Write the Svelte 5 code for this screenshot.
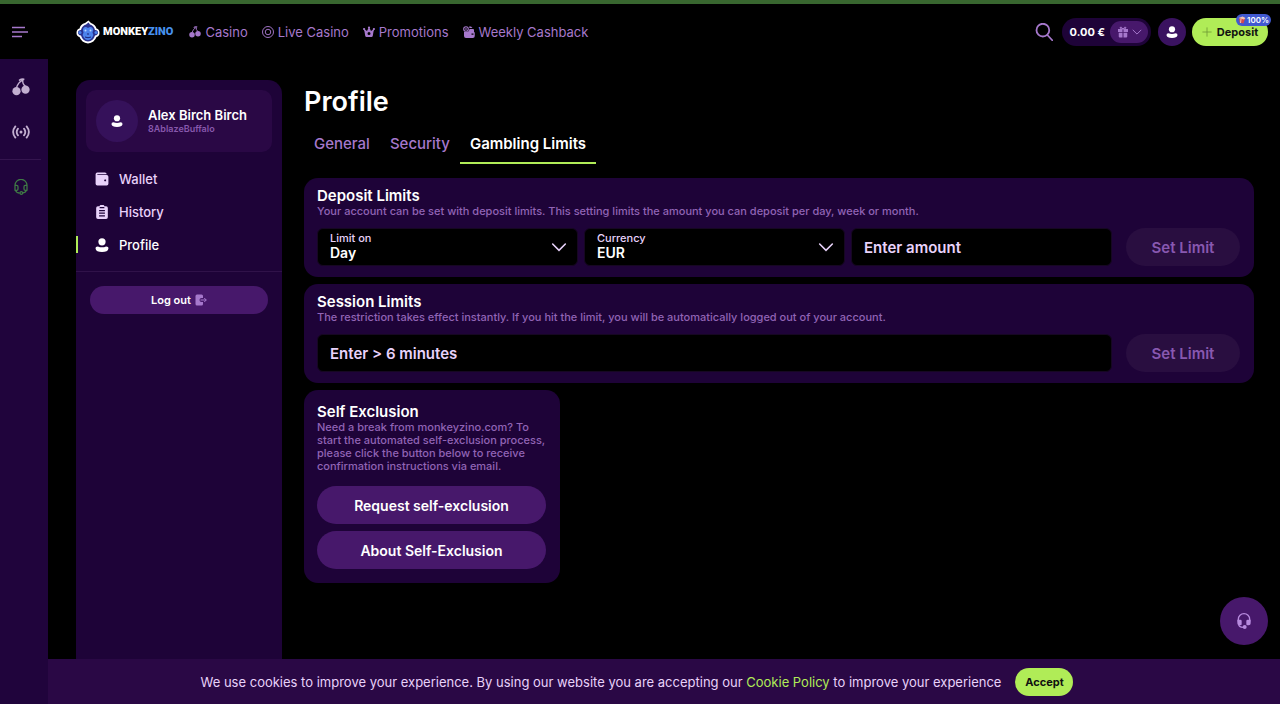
<script>
  const topLinks = [
    { icon: 'cherry', label: 'Casino' },
    { icon: 'chip', label: 'Live Casino' },
    { icon: 'crown', label: 'Promotions' },
    { icon: 'cashback', label: 'Weekly Cashback' },
  ];

  const accountLinks = [
    { icon: 'wallet', label: 'Wallet' },
    { icon: 'history', label: 'History' },
    { icon: 'user', label: 'Profile' },
  ];

  const tabs = ['General', 'Security', 'Gambling Limits'];

  let activeLink = $state('Profile');
  let activeTab = $state('Gambling Limits');
  let cookiesOpen = $state(true);

  let period = $state('Day');
  let currency = $state('EUR');
  let amount = $state('');
  let minutes = $state('');
</script>

{#snippet icon(name, size)}
  <svg class="icon" width={size} height={size} viewBox="0 0 24 24" fill="currentColor" aria-hidden="true">
    {#if name === 'cherry'}
      <circle cx="6" cy="17.5" r="5.5" />
      <circle cx="18" cy="15.5" r="5.5" />
      <path d="M6 13Q8 6 14.500 2.500Q13.500 8 18 11" fill="none" stroke="currentColor" stroke-width="1.800" />
      <path d="M9.500 3.500Q12 .5 16.500 2" fill="none" stroke="currentColor" stroke-width="2.200" />
    {:else if name === 'chip'}
      <g fill="none" stroke="currentColor" stroke-width="1.900">
        <circle cx="12" cy="12" r="11" />
        <circle cx="12" cy="12" r="5.500" />
      </g>
    {:else if name === 'crown'}
      <path d="M1 5q3 0 4 3l3 2 4-8 4 8 3-2q1-3 4-3-1 4-2 6l-1.500 9q-.5 2-2.500 2H7q-2 0-2.500-2L3 11Q2 9 1 5zM12 12a3 3 0 100 6 3 3 0 000-6z" fill-rule="evenodd" />
      <circle cx="2.200" cy="6" r="2.200" />
      <circle cx="12" cy="3" r="2.200" />
      <circle cx="21.800" cy="6" r="2.200" />
    {:else if name === 'cashback'}
      <path d="M2 12h6q5-1 5-6h7q2 0 2 2v4q1.500 0 1.500 2v6q0 4-4 4H6q-4 0-4-4zM17 15v2.500h4V15z" fill-rule="evenodd" />
      <circle cx="6" cy="6" r="4.600" fill="none" stroke="currentColor" stroke-width="2.200" />
      <path d="M6 4v4" stroke="currentColor" stroke-width="2" />
      <path d="M12 1h4l3 3h-6z" />
    {:else if name === 'live'}
      <circle cx="12" cy="12" r="2" />
      <path d="M8 7.500q-3.500 4.500 0 9M16 7.500q3.500 4.500 0 9M4.500 4.500q-6 7.500 0 15M19.500 4.500q6 7.500 0 15" fill="none" stroke="currentColor" stroke-width="2.400" stroke-linecap="round" />
    {:else if name === 'headset'}
      <g fill="none" stroke="currentColor" stroke-width="1.900" stroke-linejoin="round">
        <path d="M3 17V9.500a8.500 8.500 0 0118 0V17M3 9.500h2.500q2 0 2 2V15q0 2-2 2H3zM21 9.500h-2.500q-2 0-2 2V15q0 2 2 2H21zM4 17q1 4 6 4M20 17q-1 3.500-6 4" />
        <circle cx="12.500" cy="21" r="2" />
      </g>
    {:else if name === 'headset-solid'}
      <path d="M3.500 13V9.500a8.500 8.500 0 0117 0V13M4 17q0 4.500 7 4.500" fill="none" stroke="currentColor" stroke-width="2" />
      <path d="M2 10h4.500q2 0 2 2v5q0 1.500-2 1.500H5q-3 0-3-3zM22 10h-4.500q-2 0-2 2v5q0 1.500 2 1.500H19q3 0 3-3z" />
      <circle cx="13" cy="21" r="3" />
    {:else if name === 'wallet'}
      <path d="M1 4q0-3 3-3h13q3 0 3 3H4v1h16q3 0 3 3v12q0 3-3 3H4q-3 0-3-3zM19 13h-2.500q-2 1.500 0 3H19z" fill-rule="evenodd" />
    {:else if name === 'history'}
      <path d="M8 2q0-2 2-2h4q2 0 2 2h3q3 0 3 3v16q0 3-3 3H5q-3 0-3-3V5q0-3 3-3zM7 8.500v2h10v-2zM7 13v2h10v-2zM7 17.500v2h10v-2zM8 3.500v2h8v-2z" fill-rule="evenodd" />
    {:else if name === 'user'}
      <circle cx="12" cy="6.500" r="6.200" />
      <path d="M5 14.500q7 3 14 0 4.500 0 4 4-1 5.500-11 5.500T1 18.500q-.5-4 4-4z" />
    {:else if name === 'logout'}
      <path d="M4 1h9q3 0 3 3v4h-3q-4 0-4 4t4 4h3v4q0 3-3 3H4q-3 0-3-3V4q0-3 3-3z" />
      <path d="M11 12h11.500M18.500 8l4 4-4 4" fill="none" stroke="currentColor" stroke-width="2" />
    {:else if name === 'gift'}
      <path d="M2 6h9v6H2zM13 6h9v6h-9zM3.500 13.500H11V23H5.500q-2 0-2-2zM13 13.500h7.500V21q0 2-2 2H13z" />
      <path d="M12 6Q5 6 6 3q2-3 6 3 4-6 6-3 1 3-6 3z" fill="none" stroke="currentColor" stroke-width="2" />
    {:else if name === 'search'}
      <path d="M2 9.500a8.500 8.500 0 1017 0 8.500 8.500 0 10-17 0M16.500 16l6.500 7" fill="none" stroke="currentColor" stroke-width="2.400" stroke-linecap="round" />
    {:else if name === 'chevron'}
      <path d="M2.500 7.500L12 17l9.500-9.500" fill="none" stroke="currentColor" stroke-width="2.400" stroke-linecap="round" />
    {:else if name === 'plus'}
      <path d="M12 1v22M1 12h22" stroke="currentColor" stroke-width="2" />
    {/if}
  </svg>
{/snippet}

<div class="page">
  <header class="topbar">
    <button class="menu" aria-label="Toggle menu">
      <svg width="16" height="12" viewBox="0 0 16 12" fill="none" stroke="currentColor" stroke-width="1.300" aria-hidden="true">
        <path d="M0 1.500h13M0 6h16M0 10.500h10" />
      </svg>
    </button>

    <a class="logo" href="#home">
      <svg width="24" height="24" viewBox="0 0 48 48" aria-hidden="true">
        <path d="M25 1l5 5q9 3 11 11 6 1 6 9 0 6-6 8-4 11-17 13Q11 45 7 34q-6-2-6-8 0-8 6-9Q9 8 18 6z" fill="#fff" />
        <path d="M25 5l3 4q8 2 10 11 6 0 6 5 0 5-6 6-3 11-14 12-11-1-14-12-6-1-6-6 0-5 6-5 2-9 10-11z" fill="#29318f" />
        <path d="M24 16q5-4 9 0 3 4 0 9 3 4 0 9-3 6-9 6t-9-6q-3-5 0-9-3-5 0-9 4-4 9 0z" fill="#4c83ec" />
        <circle cx="8" cy="25" r="3" fill="#4c83ec" />
        <circle cx="40" cy="25" r="3" fill="#4c83ec" />
        <circle cx="19" cy="21" r="2" fill="#b9d8ff" />
        <circle cx="29" cy="21" r="2" fill="#b9d8ff" />
        <path d="M22 28h4M18 34q6 3 12 0" fill="none" stroke="#1b2476" stroke-width="2" />
      </svg>
      <span class="brand">MONKEY<span>ZINO</span></span>
    </a>

    <nav class="top-nav">
      {#each topLinks as link}
        <a href="#{link.icon}">{@render icon(link.icon, 12)}{link.label}</a>
      {/each}
    </nav>

    <div class="actions">
      <button class="search" aria-label="Search">{@render icon('search', 18)}</button>
      <div class="balance">
        <span>0.00 €</span>
        <button aria-label="Bonuses">{@render icon('gift', 12)}{@render icon('chevron', 10)}</button>
      </div>
      <button class="account" aria-label="Account">{@render icon('user', 12)}</button>
      <button class="deposit">
        {@render icon('plus', 10)}
        Deposit
        <span class="bonus">
          <svg width="8" height="8" viewBox="0 0 16 16" aria-hidden="true">
            <path d="M2 5l8-3 4 3-3 10-8-2z" fill="#d8484a" />
            <path d="M1 4l8-3 6 3-3 3z" fill="#f2c6b4" />
            <path d="M6 6l-1 8" stroke="#f2c6b4" stroke-width="2" />
          </svg>
          100%
        </span>
      </button>
    </div>
  </header>

  <aside class="rail">
    <a href="#casino" aria-label="Casino">{@render icon('cherry', 18)}</a>
    <a href="#live" aria-label="Live Casino">{@render icon('live', 18)}</a>
    <hr />
    <a class="support" href="#support" aria-label="Support">{@render icon('headset', 16)}</a>
  </aside>

  <div class="content">
    <aside class="sidebar">
      <div class="user-card">
        <span class="avatar">{@render icon('user', 12)}</span>
        <div>
          <p class="user-name">Alex Birch Birch</p>
          <p class="user-nick">8AblazeBuffalo</p>
        </div>
      </div>

      <nav class="side-nav">
        {#each accountLinks as link}
          <a
            href="#{link.icon}"
            class:active={activeLink === link.label}
            onclick={() => (activeLink = link.label)}
          >
            {@render icon(link.icon, 14)}{link.label}
          </a>
        {/each}
      </nav>

      <div class="logout-wrap">
        <button class="logout">Log out {@render icon('logout', 12)}</button>
      </div>
    </aside>

    <main>
      <h1>Profile</h1>

      <div class="tabs" role="tablist">
        {#each tabs as tab}
          <button role="tab" aria-selected={activeTab === tab} class:active={activeTab === tab} onclick={() => (activeTab = tab)}>
            {tab}
          </button>
        {/each}
      </div>

      <section class="panel">
        <h2>Deposit Limits</h2>
        <p>Your account can be set with deposit limits. This setting limits the amount you can deposit per day, week or month.</p>
        <div class="row">
          <div class="fields">
            <div class="select">
              <label for="period">Limit on</label>
              <select id="period" bind:value={period}>
                <option>Day</option>
                <option>Week</option>
                <option>Month</option>
              </select>
              {@render icon('chevron', 16)}
            </div>
            <div class="select">
              <label for="currency">Currency</label>
              <select id="currency" bind:value={currency}>
                <option>EUR</option>
                <option>USD</option>
              </select>
              {@render icon('chevron', 16)}
            </div>
            <input type="text" aria-label="Enter amount" placeholder="Enter amount" bind:value={amount} />
          </div>
          <button class="set" disabled={!amount}>Set Limit</button>
        </div>
      </section>

      <section class="panel">
        <h2>Session Limits</h2>
        <p>The restriction takes effect instantly. If you hit the limit, you will be automatically logged out of your account.</p>
        <div class="row">
          <div class="fields">
            <input type="text" aria-label="Session minutes" placeholder="Enter &gt; 6 minutes" bind:value={minutes} />
          </div>
          <button class="set" disabled={!(minutes > 6)}>Set Limit</button>
        </div>
      </section>

      <section class="panel exclusion">
        <h2>Self Exclusion</h2>
        <p>Need a break from monkeyzino.com? To start the automated self-exclusion process, please click the button below to receive confirmation instructions via email.</p>
        <button class="wide">Request self-exclusion</button>
        <button class="wide">About Self-Exclusion</button>
      </section>
    </main>
  </div>

  {#if cookiesOpen}
    <footer class="cookies">
      <p>
        We use cookies to improve your experience. By using our website you are accepting our
        <a href="#cookies">Cookie Policy</a> to improve your experience
      </p>
      <button onclick={() => (cookiesOpen = false)}>Accept</button>
    </footer>
  {/if}

  <button class="chat" aria-label="Live chat">{@render icon('headset-solid', 16)}</button>
</div>

<style>
  :global(body) {
    margin: 0;
    background: #000;
  }

  .page {
    --panel: #1e0338;
    --card: #2a0845;
    --button: #47186b;
    --text: #e8d2fa;
    --muted: #a678cc;
    --lime: #b0ec57;
    display: grid;
    grid-template-columns: 48px minmax(0, 1fr);
    grid-template-rows: auto 1fr auto;
    min-height: 100vh;
    box-sizing: border-box;
    border-top: 4px solid #38662f;
    font-family: Inter, sans-serif;
    font-size: 13px;
    font-weight: 500;
    color: var(--text);
  }

  h1, h2, p {
    margin: 0;
  }

  a {
    color: inherit;
    text-decoration: none;
  }

  button {
    display: flex;
    align-items: center;
    justify-content: center;
    padding: 0;
    border: none;
    background: none;
    color: inherit;
    font: inherit;
    cursor: pointer;
  }

  .icon {
    flex-shrink: 0;
  }

  /* Header */
  .topbar {
    grid-column: 1 / -1;
    display: flex;
    align-items: center;
    height: 55px;
    padding: 0 12px;
    color: var(--muted);
  }

  .menu {
    margin-right: 48px;
  }

  .logo {
    display: flex;
    align-items: center;
    gap: 3px;
    margin-right: 16px;
  }

  .brand {
    font-family: Roboto, sans-serif;
    font-size: 11px;
    font-weight: 900;
    color: #fff;
  }

  .brand span {
    color: #4791ee;
  }

  .top-nav {
    display: flex;
    gap: 14px;
    font-weight: 400;
  }

  .top-nav a {
    display: flex;
    align-items: center;
    gap: 4px;
    white-space: nowrap;
  }

  .actions {
    display: flex;
    align-items: center;
    margin-left: auto;
  }

  .search {
    margin-right: 9px;
  }

  .balance {
    display: flex;
    align-items: center;
    gap: 5px;
    height: 28px;
    margin-right: 7px;
    padding: 0 3px 0 8px;
    border-radius: 14px;
    background: var(--panel);
    color: #fff;
    font-size: 11px;
    font-weight: 700;
  }

  .balance button {
    gap: 3px;
    width: 38px;
    height: 22px;
    border-radius: 11px;
    background: var(--button);
    color: var(--muted);
  }

  .account {
    width: 28px;
    height: 28px;
    margin-right: 6px;
    border-radius: 50%;
    background: #3a1260;
    color: #fff;
  }

  .deposit {
    position: relative;
    gap: 5px;
    width: 76px;
    height: 28px;
    border-radius: 14px;
    background: var(--lime);
    color: #111;
    font-size: 11px;
    font-weight: 700;
  }

  .deposit > .icon {
    color: #6f9a35;
  }

  .bonus {
    position: absolute;
    top: -4px;
    right: -3px;
    display: flex;
    align-items: center;
    gap: 1px;
    height: 12px;
    padding: 0 2px;
    border-radius: 6px;
    background: #4159d0;
    color: #fff;
    font-size: 8px;
    font-weight: 600;
  }

  /* Left rail */
  .rail {
    grid-row: 2 / 4;
    display: flex;
    flex-direction: column;
    padding-top: 19px;
    background: #20043c;
    color: #c2afd0;
  }

  .rail a {
    display: flex;
    justify-content: center;
    width: 41px;
    margin-bottom: 27px;
  }

  .rail hr {
    width: 41px;
    height: 1px;
    margin: -9px 0 19px;
    border: none;
    background: #34154f;
  }

  .rail .support {
    color: #3f7a45;
  }

  /* Account sidebar */
  .content {
    display: flex;
    align-items: stretch;
    gap: 22px;
    padding: 21px 26px 0 28px;
  }

  .sidebar {
    flex: 0 0 206px;
    border-radius: 14px 14px 0 0;
    background: var(--panel);
  }

  .user-card {
    display: flex;
    align-items: center;
    gap: 10px;
    height: 62px;
    margin: 10px;
    padding: 0 10px;
    box-sizing: border-box;
    border-radius: 10px;
    background: var(--card);
  }

  .avatar {
    display: flex;
    align-items: center;
    justify-content: center;
    width: 42px;
    height: 42px;
    border-radius: 50%;
    background: #35115a;
    color: #fff;
  }

  .user-name {
    color: #fff;
    font-size: 13px;
    font-weight: 600;
    line-height: 16px;
  }

  .user-nick {
    color: #8858ad;
    font-size: 9px;
    font-weight: 600;
    line-height: 12px;
  }

  .side-nav {
    display: flex;
    flex-direction: column;
    padding-bottom: 10px;
    border-bottom: 1px solid #301249;
  }

  .side-nav a {
    display: flex;
    align-items: center;
    gap: 10px;
    height: 33px;
    padding-left: 19px;
  }

  .side-nav a.active {
    color: #fff;
    background: linear-gradient(var(--lime), var(--lime)) left / 2px 17px no-repeat;
  }

  .logout-wrap {
    padding: 14px;
  }

  .logout {
    gap: 4px;
    width: 100%;
    height: 28px;
    border-radius: 14px;
    background: var(--button);
    color: #fff;
    font-size: 11px;
    font-weight: 600;
  }

  .logout .icon {
    color: var(--muted);
  }

  /* Main column */
  main {
    flex: 1;
    min-width: 0;
    padding-bottom: 22px;
  }

  h1 {
    padding-top: 6px;
    color: #fff;
    font-size: 27px;
    font-weight: 600;
    line-height: 32px;
  }

  .tabs {
    display: flex;
    margin: 6px 0 14px;
  }

  .tabs button {
    height: 40px;
    padding: 0 10px;
    border-bottom: 2px solid transparent;
    color: var(--muted);
    font-size: 15px;
    font-weight: 500;
  }

  .tabs button.active {
    border-bottom-color: var(--lime);
    color: #fff;
    font-weight: 600;
  }

  .panel {
    margin-bottom: 7px;
    padding: 9px 14px 11px 13px;
    border-radius: 14px;
    background: var(--panel);
  }

  .panel h2 {
    color: #fff;
    font-size: 15px;
    font-weight: 600;
    line-height: 18px;
  }

  .panel p {
    color: #9164b5;
    font-size: 11px;
    line-height: 13px;
  }

  .row {
    display: flex;
    gap: 14px;
    margin-top: 10px;
  }

  .fields {
    flex: 1;
    display: grid;
    grid-auto-flow: column;
    grid-auto-columns: minmax(0, 1fr);
    gap: 6px;
  }

  .select,
  input {
    height: 38px;
    box-sizing: border-box;
    border: 1px solid #160722;
    border-radius: 6px;
    background: #000;
  }

  input {
    padding: 0 12px;
    color: #fff;
    font: inherit;
    font-size: 15px;
    font-weight: 600;
  }

  input::placeholder {
    color: var(--text);
    opacity: 1;
  }

  .select {
    display: grid;
    grid-template-columns: 1fr auto;
    align-items: center;
  }

  .select label {
    grid-area: 1 / 1;
    align-self: start;
    padding: 3px 12px 0;
    font-size: 11px;
    line-height: 13px;
    pointer-events: none;
  }

  .select select {
    grid-area: 1 / 1 / 2 / 3;
    width: 100%;
    height: 36px;
    padding: 11px 36px 0 12px;
    border: none;
    appearance: none;
    background: transparent;
    color: #fff;
    font: inherit;
    font-size: 14px;
    font-weight: 600;
  }

  .select .icon {
    grid-area: 1 / 2;
    margin-right: 10px;
    pointer-events: none;
  }

  .set {
    width: 114px;
    height: 38px;
    border-radius: 19px;
    background: var(--button);
    color: #fff;
    font-size: 15px;
    font-weight: 600;
  }

  .set:disabled {
    background: #290e40;
    color: #8858b0;
    cursor: default;
  }

  .exclusion {
    width: 256px;
    margin-bottom: 0;
    padding: 13px 14px 14px 13px;
    box-sizing: border-box;
  }

  /* The copy runs a little past the buttons */
  .exclusion p {
    margin-right: -10px;
  }

  .wide {
    width: 100%;
    height: 38px;
    margin-top: 7px;
    border-radius: 19px;
    background: var(--button);
    color: #fff;
    font-size: 14px;
    font-weight: 600;
  }

  .exclusion p + .wide {
    margin-top: 13px;
  }

  /* Cookie bar */
  .cookies {
    grid-column: 2;
    display: flex;
    align-items: center;
    justify-content: center;
    gap: 14px;
    height: 45px;
    padding-right: 54px;
    background: var(--card);
    font-weight: 400;
  }

  .cookies a {
    color: var(--lime);
  }

  .cookies button {
    width: 58px;
    height: 28px;
    border-radius: 14px;
    background: var(--lime);
    color: #111;
    font-size: 11px;
    font-weight: 700;
  }

  .chat {
    position: fixed;
    right: 12px;
    bottom: 59px;
    width: 48px;
    height: 48px;
    border-radius: 50%;
    background: var(--button);
    color: #b78ade;
  }
</style>
